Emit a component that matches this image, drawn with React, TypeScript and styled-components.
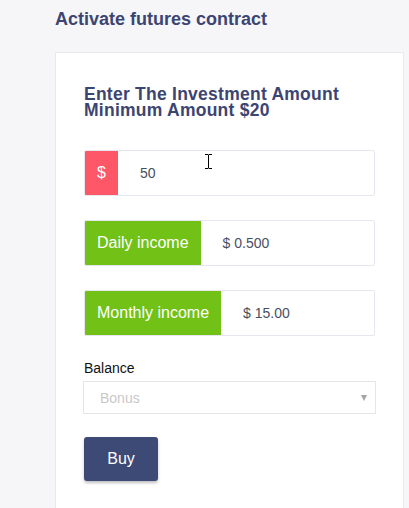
import styled, { createGlobalStyle } from 'styled-components';

const GlobalStyle = createGlobalStyle`
  html, body {
    margin: 0;
    padding: 0;
    background: #f6f6f9;
    font-family: "Liberation Sans", Arial, sans-serif;
  }
`;

const Page = styled.div`
  position: relative;
  width: 409px;
  height: 508px;
  overflow: hidden;
  padding-left: 55px;
  box-sizing: border-box;
`;

const PageTitle = styled.h2`
  margin: 0;
  padding-top: 9px;
  height: 52px;
  box-sizing: border-box;
  font-size: 18px;
  font-weight: bold;
  color: #3c4571;
`;

const Card = styled.div`
  width: 349px;
  height: 470px;
  box-sizing: border-box;
  background: #fff;
  border: 1px solid #e8e8ef;
  padding: 33px 28px 0 28px;
  display: flex;
  flex-direction: column;
`;

/* the reference sets these two lines tighter than the font size */
const Heading = styled.h3`
  margin: 0 0 32px;
  font-size: 17.5px;
  line-height: 16px;
  letter-spacing: 0.25px;
  font-weight: bold;
  color: #3c4571;
`;

const Group = styled.div`
  display: flex;
  width: 291px;
  height: 46px;
  box-sizing: border-box;
  border: 1px solid #e6e6ee;
  border-radius: 2px;
  margin-bottom: 24px;
  overflow: hidden;
`;

const Addon = styled.div<{ $tone: 'red' | 'green' }>`
  display: flex;
  align-items: center;
  padding: 0 12px;
  background: ${({ $tone }) => ($tone === 'red' ? '#fe5767' : '#71c116')};
  color: #fff;
  font-size: 16px;
  white-space: nowrap;
`;

const Value = styled.div`
  flex: 1;
  display: flex;
  align-items: center;
  padding-left: 22px;
  font-size: 14px;
  color: #4a4e5e;
`;

const Label = styled.div`
  font-size: 14px;
  color: #111;
  height: 21px;
`;

const Select = styled.div`
  width: 293px;
  height: 33px;
  margin-left: -1px;
  box-sizing: border-box;
  border: 1px solid #e6e6e6;
  display: flex;
  align-items: center;
  justify-content: space-between;
  padding: 0 8px 0 16px;
  font-size: 14px;
  color: #c9c9c9;
`;

const Arrow = styled.span`
  width: 0;
  height: 0;
  border-left: 3.5px solid transparent;
  border-right: 3.5px solid transparent;
  border-top: 6px solid #a5a5a5;
`;

const BuyButton = styled.button`
  margin-top: 23px;
  width: 74px;
  height: 44px;
  border: none;
  border-radius: 3px;
  background: #3d4a75;
  color: #fff;
  font-family: "Liberation Sans", Arial, sans-serif;
  font-size: 16px;
  box-shadow: 0 2px 3px rgba(0, 0, 0, 0.25);
  cursor: pointer;
`;

const Cursor = styled.svg`
  position: absolute;
  left: 204px;
  top: 153px;
`;

export default function App() {
  return (
    <>
      <GlobalStyle />
      <Page>
        <PageTitle>Activate futures contract</PageTitle>
        <Card>
          <Heading>
            Enter The Investment Amount
            <br />
            Minimum Amount $20
          </Heading>
          <Group>
            <Addon $tone="red">$</Addon>
            <Value>50</Value>
          </Group>
          <Group>
            <Addon $tone="green">Daily income</Addon>
            <Value>$ 0.500</Value>
          </Group>
          <Group>
            <Addon $tone="green">Monthly income</Addon>
            <Value>$ 15.00</Value>
          </Group>
          <Label>Balance</Label>
          <Select>
            <span>Bonus</span>
            <Arrow />
          </Select>
          <BuyButton>Buy</BuyButton>
        </Card>
        <Cursor width="9" height="17" viewBox="0 0 9 17">
          <path d="M1 1.5h3M5 1.5h3M4.5 1.5v14M1 15.5h3M5 15.5h3" stroke="#000" strokeWidth="1" fill="none" />
        </Cursor>
      </Page>
    </>
  );
}
